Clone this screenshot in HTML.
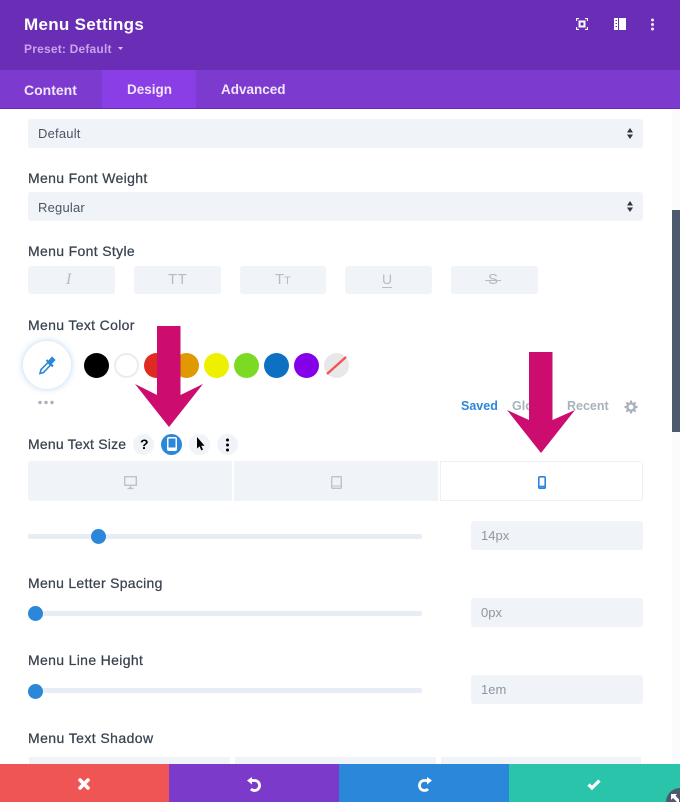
<!DOCTYPE html>
<html><head><meta charset="utf-8">
<style>
html,body{margin:0;padding:0;width:680px;height:802px;overflow:hidden}
body{background:#fff;position:relative;font-family:"Liberation Sans",sans-serif;color:#3f4a58}
#w{position:absolute;left:0;top:0;width:680px;height:802px;overflow:hidden;background:#fff}
.a{position:absolute}
.l{position:absolute;left:28px;font-size:14px;letter-spacing:.34px;color:#39434f;line-height:18px;white-space:nowrap;-webkit-text-stroke:.25px #39434f}
.f{position:absolute;background:#f0f3f8;border-radius:3px}
.t{position:absolute;white-space:nowrap}
.c{position:absolute;top:353px;width:25px;height:25px;border-radius:50%}
.tr{position:absolute;left:28px;width:394px;height:5px;background:#e6edf4;border-radius:2px}
.k{position:absolute;width:15px;height:15px;border-radius:50%;background:#2b87da}
.o{position:absolute;top:434px;width:21px;height:21px;border-radius:50%;background:#f0f3f8}
svg{position:absolute;overflow:visible}
</style></head><body><div id="w">

<div class="a" style="left:0;top:0;width:680px;height:70px;background:#6a2db5"></div>
<div class="a" style="left:0;top:70px;width:680px;height:39px;background:#7c3ace;border-bottom:1px solid #6a2db5;box-sizing:border-box"></div>
<div class="a" style="left:102px;top:70px;width:94px;height:38px;background:#8a3fe6"></div>
<div class="t" style="left:24px;top:14px;font-size:17px;font-weight:bold;color:#fff;line-height:22px;letter-spacing:.3px">Menu Settings</div>
<div class="t" style="left:24px;top:41px;font-size:12px;font-weight:bold;color:#c9a3ec;line-height:16px;letter-spacing:.2px">Preset: Default</div>
<svg style="left:118px;top:47px" width="6" height="4"><path d="M0 0H5L2.5 3Z" fill="#d8c2f0"/></svg>
<div class="t" style="left:24px;top:81px;font-size:14px;font-weight:bold;color:#f1e6fb;line-height:18px">Content</div>
<div class="t" style="left:127px;top:81px;font-size:13.5px;font-weight:bold;color:#f1e6fb;line-height:18px">Design</div>
<div class="t" style="left:221px;top:81px;font-size:13.5px;font-weight:bold;color:#f1e6fb;line-height:18px">Advanced</div>

<svg style="left:576px;top:18px" width="12" height="12" fill="none" stroke="#fff" stroke-width="1.1"><path d="M.6 3V.6H3M9 .6H11.4V3M.6 9V11.4H3M9 11.4H11.4V9"/><rect x="3.5" y="3.5" width="5" height="5" stroke-width="2"/></svg>
<svg style="left:614px;top:18px" width="12" height="12"><path d="M0 0H12V12H0Z" fill="#fff"/><path d="M4.5 0V12" stroke="#6a2db5" stroke-width="1"/><path d="M1.5 2.5H3M1.5 5.5H3M1.5 8.5H3" stroke="#6a2db5" stroke-width="1"/></svg>
<svg style="left:650px;top:18px" width="5" height="13" fill="#f3e9fb"><circle cx="2.5" cy="2" r="1.5"/><circle cx="2.5" cy="6.5" r="1.5"/><circle cx="2.5" cy="11" r="1.5"/></svg>

<div class="f" style="left:28px;top:119px;width:615px;height:29px"></div>
<div class="t" style="left:38px;top:125px;font-size:13px;line-height:17px;color:#4b5563;letter-spacing:.2px">Default</div>
<svg style="left:626px;top:128px" width="8" height="12" fill="#32373c"><path d="M4 0L7 4.5H1ZM4 11L7 6.5H1Z"/></svg>

<div class="l" style="top:169px">Menu Font Weight</div>
<div class="f" style="left:28px;top:192px;width:615px;height:29px"></div>
<div class="t" style="left:38px;top:199px;font-size:13px;line-height:17px;color:#4b5563;letter-spacing:.2px">Regular</div>
<svg style="left:626px;top:201px" width="8" height="12" fill="#32373c"><path d="M4 0L7 4.5H1ZM4 11L7 6.5H1Z"/></svg>

<div class="l" style="top:242px">Menu Font Style</div>
<div class="f" style="left:28px;top:266px;width:87px;height:28px"></div>
<div class="f" style="left:134px;top:266px;width:87px;height:28px"></div>
<div class="f" style="left:240px;top:266px;width:86px;height:28px"></div>
<div class="f" style="left:345px;top:266px;width:87px;height:28px"></div>
<div class="f" style="left:451px;top:266px;width:87px;height:28px"></div>
<div class="t" style="left:66px;top:271px;font:italic 16px/18px 'Liberation Serif',serif;color:#b4bcc6">I</div>
<div class="t" style="left:168px;top:272px;font-size:15px;line-height:16px;color:#b4bcc6;letter-spacing:.5px">TT</div>
<div class="t" style="left:275px;top:272px;font-size:15px;line-height:16px;color:#b4bcc6">T<span style="font-size:11px">T</span></div>
<div class="t" style="left:382px;top:272px;font-size:14px;line-height:15px;color:#b4bcc6;border-bottom:1px solid #b4bcc6">U</div>
<div class="t" style="left:488px;top:272px;font-size:15px;line-height:16px;color:#b4bcc6">S</div>
<div class="a" style="left:485px;top:280px;width:16px;height:1px;background:#b4bcc6"></div>

<div class="l" style="top:316px">Menu Text Color</div>
<div class="a" style="left:23px;top:341px;width:48px;height:48px;border-radius:50%;background:#fff;box-shadow:0 0 7px rgba(43,135,218,.35)"></div>
<svg style="left:38px;top:356px" width="18" height="19" fill="none" stroke="#2b87da" stroke-width="1.6"><path d="M2 17.5L3 13.5L10 6.5L12.5 9L5.5 16.5Z"/><path d="M8.5 4L15 10.5" stroke-width="2"/><path d="M10.5 5L14 .8L17.2 4L13.5 8Z" fill="#2b87da" stroke-width=".6"/></svg>
<svg style="left:38px;top:400px" width="18" height="5" fill="#a9b2bc"><circle cx="2" cy="2.5" r="1.7"/><circle cx="8" cy="2.5" r="1.7"/><circle cx="14" cy="2.5" r="1.7"/></svg>
<div class="c" style="left:84px;background:#000"></div>
<div class="c" style="left:114px;background:#fff;box-sizing:border-box;border:2px solid #ececec"></div>
<div class="c" style="left:144px;background:#e02b20"></div>
<div class="c" style="left:174px;background:#e09900"></div>
<div class="c" style="left:204px;background:#edf000"></div>
<div class="c" style="left:234px;background:#7cda24"></div>
<div class="c" style="left:264px;background:#0c71c3"></div>
<div class="c" style="left:294px;background:#8300e9"></div>
<div class="c" style="left:324px;background:#e8e8ea"></div>
<svg style="left:324px;top:353px" width="25" height="25"><path d="M3 21L22 4" stroke="#f05454" stroke-width="2.4"/></svg>

<div class="t" style="left:461px;top:398px;font-size:12.5px;font-weight:bold;line-height:16px;color:#2b87da">Saved</div>
<div class="t" style="left:512px;top:398px;font-size:12.5px;font-weight:bold;line-height:16px;color:#a9b2bc">Global</div>
<div class="t" style="left:567px;top:398px;font-size:12.5px;font-weight:bold;line-height:16px;color:#a9b2bc">Recent</div>
<svg style="left:624px;top:400px" width="14" height="14" fill="none" stroke="#a9b2bc"><circle cx="7" cy="7" r="3.6" stroke-width="2.4"/><path d="M7 .5V3M7 11V13.5M.5 7H3M11 7H13.5M2.4 2.4L4.2 4.2M9.8 9.8L11.6 11.6M2.4 11.6L4.2 9.8M9.8 4.2L11.6 2.4" stroke-width="2.2"/></svg>

<div class="l" style="top:435px;letter-spacing:.2px">Menu Text Size</div>
<div class="o" style="left:133px"></div>
<div class="o" style="left:161px;background:#2b87da"></div>
<div class="o" style="left:189px"></div>
<div class="o" style="left:217px"></div>
<div class="t" style="left:140px;top:436px;font-size:14px;font-weight:bold;line-height:17px;color:#000">?</div>
<svg style="left:167px;top:437px" width="10" height="14"><rect x="0" y="0" width="10" height="14" rx="2" fill="#fff"/><rect x="1.5" y="1.5" width="7" height="9" fill="#2b87da"/></svg>
<svg style="left:196px;top:437px" width="9" height="15"><path d="M1 0V11.5L3.5 9.3L5.3 13.4L7 12.6L5.3 8.7H8.6Z" fill="#000"/></svg>
<svg style="left:225px;top:438px" width="5" height="14" fill="#000"><circle cx="2.5" cy="2" r="1.5"/><circle cx="2.5" cy="7" r="1.5"/><circle cx="2.5" cy="12" r="1.5"/></svg>

<div class="f" style="left:28px;top:461px;width:204px;height:40px;border-radius:3px 0 0 3px"></div>
<div class="f" style="left:234px;top:461px;width:204px;height:40px;border-radius:0"></div>
<div class="a" style="left:440px;top:461px;width:203px;height:40px;box-sizing:border-box;border:1px solid #edf1f6;border-radius:0 3px 3px 0;background:#fff"></div>
<svg style="left:124px;top:476px" width="13" height="13" fill="none" stroke="#bcc3cc" stroke-width="1.4"><rect x=".7" y=".7" width="11.6" height="8.6"/><path d="M6.5 9.5V12M3.5 12.4H9.5"/></svg>
<svg style="left:331px;top:476px" width="11" height="13" fill="none" stroke="#bcc3cc" stroke-width="1.4"><rect x=".7" y=".7" width="9.6" height="11.6" rx="1"/><path d="M1 10H10" stroke-width="1"/></svg>
<svg style="left:538px;top:476px" width="8" height="13" fill="none" stroke="#2b87da" stroke-width="1.6"><rect x=".8" y=".8" width="6.4" height="11.4" rx="1"/><path d="M1 10.5H7"/></svg>

<div class="tr" style="top:534px"></div>
<div class="k" style="left:91px;top:529px"></div>
<div class="f" style="left:471px;top:521px;width:172px;height:29px"></div>
<div class="t" style="left:481px;top:528px;font-size:13px;line-height:16px;color:#8d96a2">14px</div>

<div class="l" style="top:574px;letter-spacing:.29px">Menu Letter Spacing</div>
<div class="tr" style="top:611px"></div>
<div class="k" style="left:28px;top:606px"></div>
<div class="f" style="left:471px;top:598px;width:172px;height:29px"></div>
<div class="t" style="left:481px;top:605px;font-size:13px;line-height:16px;color:#8d96a2">0px</div>

<div class="l" style="top:651px">Menu Line Height</div>
<div class="tr" style="top:688px"></div>
<div class="k" style="left:28px;top:684px"></div>
<div class="f" style="left:471px;top:675px;width:172px;height:29px"></div>
<div class="t" style="left:481px;top:682px;font-size:13px;line-height:16px;color:#8d96a2">1em</div>

<div class="l" style="top:729px;letter-spacing:.42px">Menu Text Shadow</div>
<div class="f" style="left:29px;top:757px;width:201px;height:10px;border-radius:0"></div>
<div class="f" style="left:235px;top:757px;width:201px;height:10px;border-radius:0"></div>
<div class="f" style="left:441px;top:757px;width:200px;height:10px;border-radius:0"></div>

<div class="a" style="left:672px;top:210px;width:8px;height:222px;background:#4d5a6e"></div>
<div class="a" style="left:672px;top:109px;width:8px;height:101px;background:#fafbfc"></div>
<div class="a" style="left:672px;top:432px;width:8px;height:333px;background:#fafbfc"></div>

<svg style="left:0;top:0" width="680" height="802"><path d="M157 326H180.500V395L203 384L169 427L135 384L157 395Z" fill="#cc0c6f"/><path d="M529 352H552.500V420L575 410L541 453L507 410L529 420Z" fill="#cc0c6f"/></svg>

<div class="a" style="left:0;top:764px;width:169px;height:38px;background:#ef5555"></div>
<div class="a" style="left:169px;top:764px;width:170px;height:38px;background:#7c3acb"></div>
<div class="a" style="left:339px;top:764px;width:170px;height:38px;background:#2b87da"></div>
<div class="a" style="left:509px;top:764px;width:171px;height:38px;background:#29c4a9"></div>
<svg style="left:78px;top:778px" width="12" height="12"><path d="M2 2L10 10M10 2L2 10" stroke="#fff" stroke-width="3.6" stroke-linecap="round"/></svg>
<svg style="left:247px;top:777px" width="15" height="15" fill="none" stroke="#fff" stroke-width="2.8"><path d="M3 3.500H8A5 5 0 1 1 4 12"/><path d="M0 3.500L5 0V7.500Z" fill="#fff" stroke="none"/></svg>
<svg style="left:417px;top:777px" width="15" height="15" fill="none" stroke="#fff" stroke-width="2.8"><path d="M12 3.500H7A5 5 0 1 0 11 12"/><path d="M15 3.500L10 0V7.500Z" fill="#fff" stroke="none"/></svg>
<svg style="left:587px;top:779px" width="14" height="11" fill="none" stroke="#fff" stroke-width="3.200"><path d="M1.500 5.500L5 9L12.500 1.500"/></svg>
<div class="a" style="left:666px;top:788px;width:28px;height:28px;border-radius:50%;background:#4d5a6e"></div>
<svg style="left:671px;top:794px" width="8" height="8"><path d="M0 0H6L4.500 1.800L8 5.500V8H6L2 4L0 6Z" fill="#fff"/></svg>
</div></body></html>
